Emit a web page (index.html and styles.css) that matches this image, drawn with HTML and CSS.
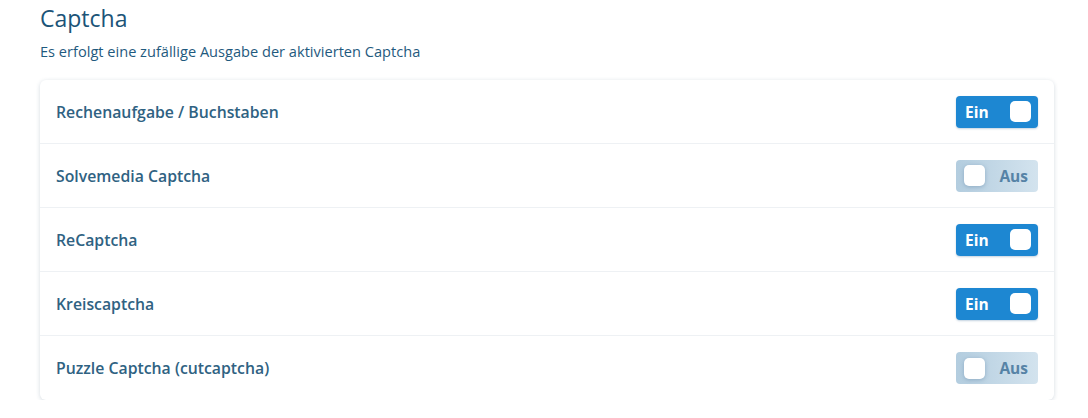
FILE: index.html
```html
<!DOCTYPE html>
<html lang="de">
<head>
<meta charset="utf-8">
<link rel="stylesheet" href="styles.css">
</head>
<body>
<div class="page">
  <h1 class="title">Captcha</h1>
  <p class="subtitle">Es erfolgt eine zufällige Ausgabe der aktivierten Captcha</p>
  <div class="card">
    <div class="row"><span class="label">Rechenaufgabe / Buchstaben</span><span class="toggle on"><span class="txt">Ein</span><span class="knob"></span></span></div>
    <div class="row"><span class="label">Solvemedia Captcha</span><span class="toggle off"><span class="knob"></span><span class="txt">Aus</span></span></div>
    <div class="row"><span class="label">ReCaptcha</span><span class="toggle on"><span class="txt">Ein</span><span class="knob"></span></span></div>
    <div class="row"><span class="label">Kreiscaptcha</span><span class="toggle on"><span class="txt">Ein</span><span class="knob"></span></span></div>
    <div class="row"><span class="label">Puzzle Captcha (cutcaptcha)</span><span class="toggle off"><span class="knob"></span><span class="txt">Aus</span></span></div>
  </div>
</div>
</body>
</html>
```
FILE: styles.css
```css
* { box-sizing: border-box; }
html, body { margin: 0; padding: 0; background: #fff; }
body { font-family: "Open Sans", "Noto Sans", sans-serif; }
.page { padding: 2px 34px 0 40px; }
.title {
  margin: 0;
  font-size: 23px;
  font-weight: 400;
  color: #1b5478;
  line-height: 32px;
}
.subtitle {
  margin: 7px 0 0;
  font-size: 14.6px;
  color: #1f5a7e;
  line-height: 20px;
}
.card {
  margin-top: 19px;
  background: #fff;
  border-radius: 6px;
  box-shadow: 0 1px 4px rgba(60, 90, 120, 0.22);
}
.row {
  height: 64px;
  display: flex;
  align-items: center;
  justify-content: space-between;
  padding: 0 16px;
  border-bottom: 1px solid #eef1f4;
}
.row:last-child { border-bottom: none; }
.label {
  font-size: 15.8px;
  font-weight: 600;
  color: #2f6282;
}
.toggle {
  width: 82px;
  height: 32px;
  border-radius: 4px;
  display: flex;
  align-items: center;
  padding: 0 6px 0 9px;
  font-size: 15.5px;
  font-weight: 700;
}
.toggle.on {
  background: #1d87d2;
  color: #fff;
  justify-content: space-between;
  box-shadow: 0 1px 2px rgba(20, 80, 130, 0.25);
}
.toggle.off {
  background: linear-gradient(90deg, #b3cddf 0%, #d3e3ee 100%);
  color: #5683a6;
  justify-content: space-between;
  padding: 0 10px 0 8px;
}
.knob {
  width: 21px;
  height: 21px;
  border-radius: 5px;
  background: #fff;
}
.toggle.on .knob { margin-right: 1px; }
.toggle.off .knob { box-shadow: 0 1px 4px rgba(60, 100, 140, 0.35); }
```
